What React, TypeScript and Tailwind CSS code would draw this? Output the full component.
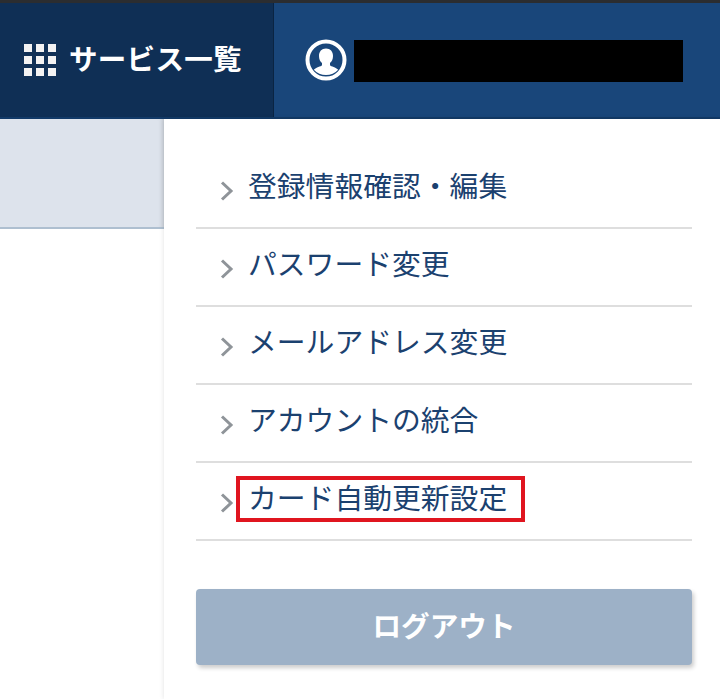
import React from "react";

const items = ["登録情報確認・編集", "パスワード変更", "メールアドレス変更", "アカウントの統合", "カード自動更新設定"];

function Chevron() {
  return (
    <svg width="14" height="20" viewBox="0 0 14 20" className="shrink-0 mt-[5px]" fill="none">
      <path d="M2 1.5 L11 10 L2 18.5" stroke="#8f9499" strokeWidth="3" />
    </svg>
  );
}

function GridIcon() {
  const cells = Array.from({ length: 9 });
  return (
    <div className="grid grid-cols-3 w-[32px] h-[32px] gap-[4px]">
      {cells.map((_, i) => (
        <div key={i} className="bg-[#f2f2f2] w-[8px] h-[8px]" />
      ))}
    </div>
  );
}

function UserIcon() {
  return (
    <svg width="42" height="42" viewBox="0 0 42 42">
      <circle cx="21" cy="21" r="18.5" fill="#19467a" stroke="#ffffff" strokeWidth="4" />
      <path
        d="M21 9.5c-4.4 0-7 3.2-7 7.4 0 3 1.2 5.6 3 7.2v2.2c-1 1.2-6 2.2-8.2 4.4a16.5 16.5 0 0 0 24.4 0c-2.2-2.2-7.2-3.2-8.2-4.4v-2.2c1.8-1.6 3-4.2 3-7.2 0-4.2-2.6-7.4-7-7.4z"
        fill="#ffffff"
      />
    </svg>
  );
}

export default function App() {
  return (
    <div
      className="w-[720px] h-[699px] overflow-hidden bg-white flex flex-col"
      style={{ fontFamily: '"Noto Sans CJK JP", "Noto Sans", sans-serif' }}
    >
      <div className="h-[3px] bg-[#2b2d30] shrink-0" />
      <header className="h-[116px] shrink-0 flex border-b-2 border-[#123a68]">
        <div className="w-[274px] bg-[#0f2f55] border-r border-[#0a2442] flex items-center pl-[24px] gap-[13px]">
          <GridIcon />
          <span className="text-white font-bold text-[28.5px] leading-none tracking-[0.3px] mb-[3px]">サービス一覧</span>
        </div>
        <div className="flex-1 bg-[#19467a] flex items-center pl-[31px] gap-[7px]">
          <UserIcon />
          <div className="w-[329px] h-[42px] bg-black mt-[2px]" />
        </div>
      </header>
      <div className="flex-1 flex min-h-0">
        <div className="w-[164px] shrink-0">
          <div className="h-[110px] bg-[#dde3ec] border-b-2 border-[#aebfd0] shadow-[inset_-6px_0_6px_-6px_rgba(0,0,0,0.18)]" />
        </div>
        <div className="flex-1 bg-white pl-[32px] pr-[28px] pt-[32px] shadow-[0_0_5px_rgba(0,0,0,0.12)]">
          <ul>
            {items.map((t, i) => (
              <li key={t} className="relative h-[78px] border-b-2 border-[#dedede] flex items-center pl-[24px] gap-[14px] pb-[2px]">
                <Chevron />
                <span className="text-[#1b416f] text-[28.8px] leading-none -mt-[6px] whitespace-nowrap">{t}</span>
                {i === 4 && (
                  <div className="absolute left-[40px] top-[13px] w-[289px] h-[46px] border-[4px] border-[#e0151f]" />
                )}
              </li>
            ))}
          </ul>
          <button className="mt-[48px] w-[496px] h-[76px] rounded-[4px] bg-[#9db1c7] text-white font-bold text-[28.6px] pb-[4px] shadow-[2px_3px_4px_rgba(0,0,0,0.2)]">
            ログアウト
          </button>
        </div>
      </div>
    </div>
  );
}
